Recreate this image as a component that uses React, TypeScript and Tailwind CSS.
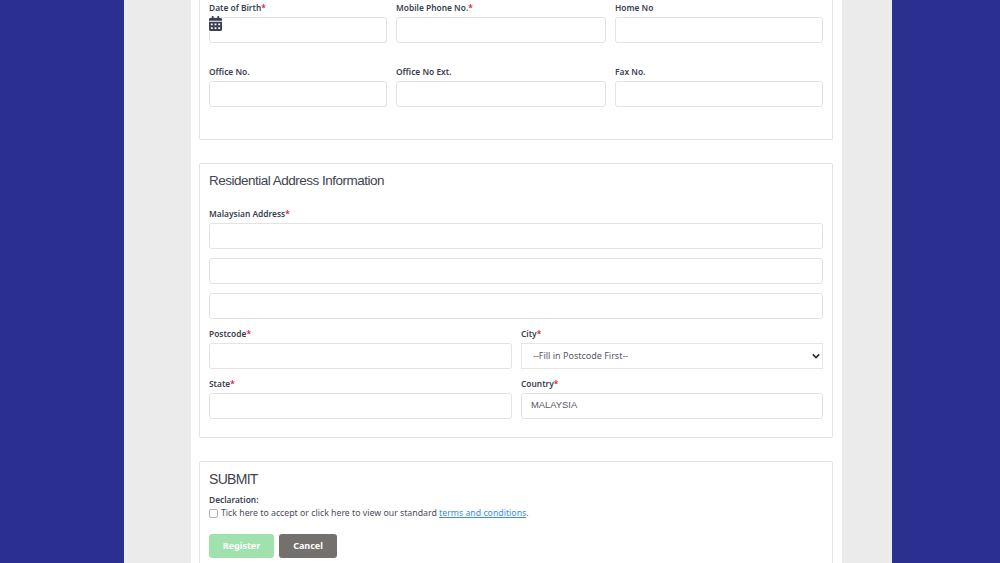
import { FaCalendarAlt } from "react-icons/fa";

function Label({ text, req }: { text: string; req?: boolean }) {
  return (
    <label className="block h-[14px] text-[8.4px] leading-[14px] font-semibold text-[#3a3f51]">
      {text}
      {req && <span className="text-[#e0202c]">*</span>}
    </label>
  );
}

function Input({ value, className }: { value?: string; className?: string }) {
  return (
    <input
      readOnly
      value={value ?? ""}
      className={`block w-full h-[26px] rounded-[3px] border border-[#e3e3e3] bg-white px-[9px] pb-[3px] text-[9.4px] text-[#555a66] font-['Liberation_Sans',sans-serif] ${className ?? ""}`}
    />
  );
}

export default function App() {
  return (
    <div className="h-[563px] overflow-hidden bg-[#2b3090] font-['Noto_Sans',sans-serif]">
      <div className="ml-[124px] w-[768px] h-full bg-[#ebebeb] pl-[67px] pr-[50px]">
        <div className="h-full bg-white pl-[8px] pr-[9px]">
          <section className="h-[140px] rounded-b-[2px] border border-t-0 border-[#e3e3e3] px-[9px] pt-[1px]">
            <div className="grid grid-cols-[178px_210px_208px] gap-x-[9px] gap-y-[22px]">
              <div className="relative">
                <Label text="Date of Birth" req />
                <Input className="mt-[2px]" />
                <FaCalendarAlt className="absolute left-0 top-[15px] w-[13px] h-[15px] text-[#3c3f55]" />
              </div>
              <div>
                <Label text="Mobile Phone No." req />
                <Input className="mt-[2px]" />
              </div>
              <div>
                <Label text="Home No" />
                <Input className="mt-[2px]" />
              </div>
              <div>
                <Label text="Office No." />
                <Input className="mt-[2px]" />
              </div>
              <div>
                <Label text="Office No Ext." />
                <Input className="mt-[2px]" />
              </div>
              <div>
                <Label text="Fax No." />
                <Input className="mt-[2px]" />
              </div>
            </div>
          </section>

          <section className="mt-[23px] h-[275px] rounded-[2px] border border-[#e3e3e3] px-[9px] pt-[7px]">
            <h2 className="h-[20px] text-[13.5px] leading-[20px] tracking-[-0.5px] text-[#3f4350] font-['Liberation_Sans',sans-serif]">
              Residential Address Information
            </h2>
            <div className="mt-[16px]">
              <Label text="Malaysian Address" req />
            </div>
            <div className="flex flex-col gap-[9px] mt-[2px]">
              <Input />
              <Input />
              <Input />
            </div>
            <div className="grid grid-cols-[303px_302px] gap-x-[9px] gap-y-[8px] mt-[8px]">
              <div>
                <Label text="Postcode" req />
                <Input className="mt-[2px]" />
              </div>
              <div>
                <Label text="City" req />
                <div className="relative mt-[2px] h-[26px] border border-[#e6e6e6] bg-white pl-[11px] text-[9px] leading-[24px] text-[#555a66]">
                  --Fill in Postcode First--
                  <svg viewBox="0 0 10 10" className="absolute right-[2px] top-[8px] w-[8px] h-[8px]">
                    <path d="M1 3l4 4 4-4" fill="none" stroke="#2a2a2a" strokeWidth="2" />
                  </svg>
                </div>
              </div>
              <div>
                <Label text="State" req />
                <Input className="mt-[2px]" />
              </div>
              <div>
                <Label text="Country" req />
                <Input value="MALAYSIA" className="mt-[2px]" />
              </div>
            </div>
          </section>

          <section className="mt-[23px] h-[200px] rounded-[2px] border border-[#e3e3e3] px-[9px] pt-[7px]">
            <h2 className="h-[20px] text-[14px] leading-[20px] tracking-[-0.7px] text-[#3f4350] font-['Liberation_Sans',sans-serif]">
              SUBMIT
            </h2>
            <div className="mt-[4px]">
              <Label text="Declaration:" />
            </div>
            <div className="flex items-center h-[13px] text-[8.75px] text-[#4a4e5a]">
              <span className="w-[9px] h-[9px] rounded-[2px] border border-[#b0b0b0] bg-white mr-[3px]" />
              <span>
                Tick here to accept or click here to view our standard{" "}
                <a className="text-[#3b8bf0] underline">terms and conditions</a>.
              </span>
            </div>
            <div className="mt-[14px] flex gap-[5px]">
              <button className="w-[65px] h-[24px] rounded-[3px] bg-[#9fe2ae] text-[9px] font-bold text-white">
                Register
              </button>
              <button className="w-[58px] h-[24px] rounded-[3px] bg-[#74706d] text-[9px] font-bold text-white">
                Cancel
              </button>
            </div>
          </section>
        </div>
      </div>
    </div>
  );
}
